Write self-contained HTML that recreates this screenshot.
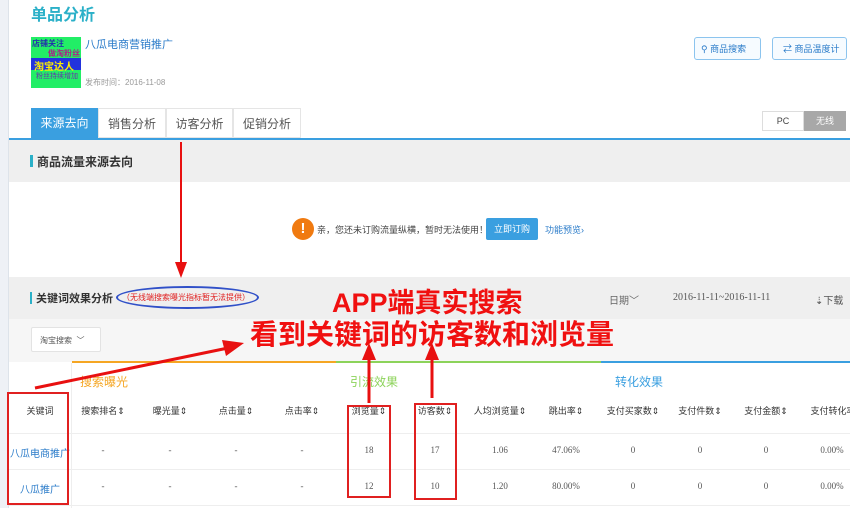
<!DOCTYPE html>
<html><head><meta charset="utf-8"><style>
*{margin:0;padding:0;box-sizing:border-box}
body{width:850px;height:508px;overflow:hidden;background:#fff;font-family:"Liberation Sans","Noto Sans CJK SC",sans-serif;position:relative;font-size:11px;color:#333}
.a{position:absolute;white-space:nowrap}
.th{position:absolute;top:404px;font-size:9px;color:#333;transform:translateX(-50%);white-space:nowrap}
.td{position:absolute;font-size:9px;color:#555;transform:translateX(-50%);font-family:"Liberation Serif","Noto Serif CJK SC",serif;white-space:nowrap}
</style></head><body>
<div class="a" style="left:0;top:0;width:9px;height:508px;background:#eef1f6;border-right:1px solid #dde3ea"></div>
<div class="a" style="left:31px;top:1px;font-size:16px;font-weight:bold;color:#2bb0c8">单品分析</div>
<div class="a" style="left:31px;top:37px;width:50px;height:51px;background:#22ee66"></div>
<div class="a" style="left:31px;top:58px;width:50px;height:12px;background:#2233dd"></div>
<div class="a" style="left:32px;top:38px;font-size:8px;color:#2233aa;font-weight:bold">店铺关注</div>
<div class="a" style="left:48px;top:48px;font-size:8px;color:#aa2288;font-weight:bold">做淘粉丝</div>
<div class="a" style="left:34px;top:58px;font-size:10px;color:#ffee00;font-weight:bold">淘宝达人</div>
<div class="a" style="left:36px;top:71px;font-size:7px;color:#6633aa">粉丝持续增加</div>
<div class="a" style="left:85px;top:36px;font-size:11px;color:#2a7bc9">八瓜电商营销推广</div>
<div class="a" style="left:85px;top:77px;font-size:8px;color:#999">发布时间：2016-11-08</div>
<div class="a" style="left:694px;top:37px;width:67px;height:23px;border:1px solid #8cc4ee;border-radius:3px;background:#f6fbff;font-size:9px;color:#2a7bc9;padding:4px 0 0 6px">&#9906; 商品搜索</div>
<div class="a" style="left:772px;top:37px;width:75px;height:23px;border:1px solid #8cc4ee;border-radius:3px;background:#f6fbff;font-size:9px;color:#2a7bc9;padding:4px 0 0 10px">⇄ 商品温度计</div>
<div class="a" style="left:31px;top:108px;width:67px;height:30px;background:#3a9fe0;color:#fff;font-size:12px;text-align:center;line-height:30px">来源去向</div>
<div class="a" style="left:98px;top:108px;width:68px;height:30px;border:1px solid #e5e5e5;color:#555;font-size:12px;text-align:center;line-height:30px">销售分析</div>
<div class="a" style="left:166px;top:108px;width:67px;height:30px;border:1px solid #e5e5e5;color:#555;font-size:12px;text-align:center;line-height:30px">访客分析</div>
<div class="a" style="left:233px;top:108px;width:68px;height:30px;border:1px solid #e5e5e5;color:#555;font-size:12px;text-align:center;line-height:30px">促销分析</div>
<div class="a" style="left:762px;top:111px;width:42px;height:20px;border:1px solid #ddd;font-size:9px;text-align:center;line-height:18px;color:#444">PC</div>
<div class="a" style="left:804px;top:111px;width:42px;height:20px;background:#a8a8a8;font-size:9px;text-align:center;line-height:20px;color:#fff">无线</div>
<div class="a" style="left:9px;top:138px;width:841px;height:2px;background:#3a9fe0"></div>
<div class="a" style="left:9px;top:140px;width:841px;height:42px;background:#efefef"></div>
<div class="a" style="left:30px;top:155px;width:3px;height:12px;background:#2bb0c8"></div>
<div class="a" style="left:37px;top:153px;font-size:12px;font-weight:bold;color:#333">商品流量来源去向</div>
<div class="a" style="left:292px;top:218px;width:22px;height:22px;border-radius:50%;background:#f07a10;color:#fff;font-weight:bold;font-size:15px;text-align:center;line-height:22px">!</div>
<div class="a" style="left:317px;top:223px;font-size:9px;color:#444">亲，您还未订购流量纵横，暂时无法使用！</div>
<div class="a" style="left:486px;top:218px;width:52px;height:22px;background:#3a9fe0;border-radius:2px;color:#fff;font-size:9px;text-align:center;line-height:22px">立即订购</div>
<div class="a" style="left:545px;top:223px;font-size:9px;color:#2a7bc9">功能预览›</div>
<div class="a" style="left:9px;top:277px;width:841px;height:42px;background:#efefef"></div>
<div class="a" style="left:9px;top:319px;width:841px;height:43px;background:#f6f6f6"></div>
<div class="a" style="left:30px;top:292px;width:2px;height:12px;background:#2bb0c8"></div>
<div class="a" style="left:36px;top:290px;font-size:11px;font-weight:bold;color:#333">关键词效果分析</div>
<div class="a" style="left:116px;top:286px;width:143px;height:23px;border:2px solid #3050c8;border-radius:50%"></div>
<div class="a" style="left:122px;top:292px;font-size:8px;color:#e02020">（无线端搜索曝光指标暂无法提供）</div>
<div class="a" style="left:609px;top:292px;font-size:10px;color:#666">日期﹀</div>
<div class="a" style="left:673px;top:292px;font-size:10px;color:#555;font-family:'Liberation Serif',serif">2016-11-11~2016-11-11</div>
<div class="a" style="left:815px;top:292px;font-size:10px;color:#555">⇣下载</div>
<div class="a" style="left:31px;top:327px;width:70px;height:25px;background:#fff;border:1px solid #e3e3e3;border-radius:2px;font-size:8px;color:#555;padding:7px 0 0 8px">淘宝搜索 &nbsp;﹀</div>
<div class="a" style="left:72px;top:361px;width:264px;height:2px;background:#f5a623"></div>
<div class="a" style="left:336px;top:361px;width:265px;height:2px;background:#8cd35a"></div>
<div class="a" style="left:601px;top:361px;width:249px;height:2px;background:#3a9fe0"></div>
<div class="a" style="left:80px;top:373px;font-size:12px;color:#f5a623">搜索曝光</div>
<div class="a" style="left:350px;top:373px;font-size:12px;color:#8cd35a">引流效果</div>
<div class="a" style="left:615px;top:373px;font-size:12px;color:#3a9fe0">转化效果</div>
<div class="a" style="left:71px;top:363px;width:1px;height:145px;background:#eee"></div>
<div class="a" style="left:9px;top:433px;width:841px;height:1px;background:#eee"></div>
<div class="a" style="left:9px;top:469px;width:841px;height:1px;background:#eee"></div>
<div class="a" style="left:9px;top:505px;width:841px;height:1px;background:#eee"></div>
<div class="th" style="left:40px">关键词</div>
<div class="th" style="left:103px">搜索排名⇕</div>
<div class="th" style="left:170px">曝光量⇕</div>
<div class="th" style="left:236px">点击量⇕</div>
<div class="th" style="left:302px">点击率⇕</div>
<div class="th" style="left:369px">浏览量⇕</div>
<div class="th" style="left:435px">访客数⇕</div>
<div class="th" style="left:500px">人均浏览量⇕</div>
<div class="th" style="left:566px">跳出率⇕</div>
<div class="th" style="left:633px">支付买家数⇕</div>
<div class="th" style="left:700px">支付件数⇕</div>
<div class="th" style="left:766px">支付金额⇕</div>
<div class="th" style="left:833px">支付转化率</div>
<div class="td" style="left:40px;top:445px;font-size:10px;color:#2a7bc9;font-family:'Liberation Sans','Noto Sans CJK SC',sans-serif">八瓜电商推广</div>
<div class="td" style="left:40px;top:481px;font-size:10px;color:#2a7bc9;font-family:'Liberation Sans','Noto Sans CJK SC',sans-serif">八瓜推广</div>
<div class="td" style="left:103px;top:445px">-</div><div class="td" style="left:170px;top:445px">-</div><div class="td" style="left:236px;top:445px">-</div><div class="td" style="left:302px;top:445px">-</div>
<div class="td" style="left:369px;top:445px">18</div><div class="td" style="left:435px;top:445px">17</div><div class="td" style="left:500px;top:445px">1.06</div><div class="td" style="left:566px;top:445px">47.06%</div>
<div class="td" style="left:633px;top:445px">0</div><div class="td" style="left:700px;top:445px">0</div><div class="td" style="left:766px;top:445px">0</div><div class="td" style="left:832px;top:445px">0.00%</div>
<div class="td" style="left:103px;top:481px">-</div><div class="td" style="left:170px;top:481px">-</div><div class="td" style="left:236px;top:481px">-</div><div class="td" style="left:302px;top:481px">-</div>
<div class="td" style="left:369px;top:481px">12</div><div class="td" style="left:435px;top:481px">10</div><div class="td" style="left:500px;top:481px">1.20</div><div class="td" style="left:566px;top:481px">80.00%</div>
<div class="td" style="left:633px;top:481px">0</div><div class="td" style="left:700px;top:481px">0</div><div class="td" style="left:766px;top:481px">0</div><div class="td" style="left:832px;top:481px">0.00%</div>
<div class="a" style="left:7px;top:392px;width:62px;height:113px;border:2px solid #e02020"></div>
<div class="a" style="left:347px;top:405px;width:44px;height:93px;border:2px solid #e02020"></div>
<div class="a" style="left:414px;top:403px;width:43px;height:97px;border:2px solid #e02020"></div>
<div class="a" style="left:332px;top:281px;font-size:27px;font-weight:bold;color:#f01010">APP端真实搜索</div>
<div class="a" style="left:250px;top:313px;font-size:28px;font-weight:bold;color:#f01010">看到关键词的访客数和浏览量</div>
<svg class="a" style="left:0;top:0" width="850" height="508">
<g fill="#e81010" stroke="#e81010">
<line x1="181" y1="142" x2="181" y2="265" stroke-width="2"/>
<polygon points="175,262 187,262 181,278" stroke="none"/>
<line x1="35" y1="388" x2="228" y2="348" stroke-width="3"/>
<polygon points="222,340 244,343 226,356" stroke="none"/>
<line x1="369" y1="403" x2="369" y2="357" stroke-width="3"/>
<polygon points="362,360 376,360 369,343" stroke="none"/>
<line x1="432" y1="398" x2="432" y2="357" stroke-width="3"/>
<polygon points="425,360 439,360 432,343" stroke="none"/>
</g>
</svg>
</body></html>
